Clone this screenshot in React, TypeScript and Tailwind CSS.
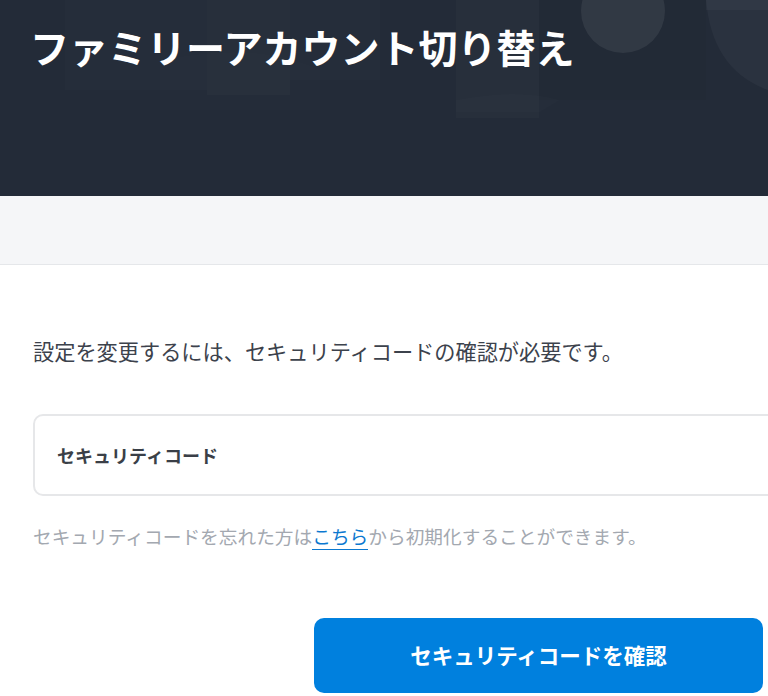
export default function App() {
  return (
    <div className="min-h-screen w-full overflow-hidden bg-white font-['Noto_Sans_CJK_JP','Noto_Sans',sans-serif]">
      {/* Header */}
      <header className="relative h-[196px] overflow-hidden bg-[#232b38]">
        <svg className="absolute inset-0 h-full w-full" viewBox="0 0 768 196" preserveAspectRatio="none">
          <rect x="65" y="0" width="142" height="90" fill="#ffffff" fillOpacity="0.012" />
          <rect x="207" y="0" width="83" height="95" fill="#ffffff" fillOpacity="0.02" />
          <rect x="290" y="0" width="90" height="80" fill="#ffffff" fillOpacity="0.01" />
          <rect x="456" y="0" width="83" height="118" fill="#ffffff" fillOpacity="0.018" />
          <rect x="539" y="0" width="167" height="100" fill="#000000" fillOpacity="0.02" />
          <circle cx="623" cy="11" r="42" fill="#ffffff" fillOpacity="0.07" />
          <path d="M706 0 H768 V90 Q712 70 706 0 Z" fill="#ffffff" fillOpacity="0.035" />
          <rect x="706" y="0" width="62" height="10" fill="#ffffff" fillOpacity="0.03" />
          <path d="M160 60 Q260 40 320 70 L320 110 L160 110 Z" fill="#ffffff" fillOpacity="0.008" />
          <path d="M456 100 Q520 88 560 100 L540 112 L456 112 Z" fill="#ffffff" fillOpacity="0.012" />
        </svg>
        <h1 className="relative pl-[30px] pt-[18px] text-[39px] font-bold leading-[56px] text-white">
          ファミリーアカウント切り替え
        </h1>
      </header>

      {/* Band */}
      <div className="h-[69px] border-b border-[#e5e7ea] bg-[#f5f6f8]" />

      {/* Content */}
      <main className="px-[33px] pt-[71px]">
        <p className="whitespace-nowrap text-[21.2px] leading-[30px] text-[#3c424c]">
          設定を変更するには、セキュリティコードの確認が必要です。
        </p>

        <div className="mt-[48px] flex h-[82px] w-[760px] shrink-0 items-center rounded-[10px] border-2 border-[#e6e7e9] px-[22px]">
          <span className="text-[18px] font-bold text-[#3a3f47]">セキュリティコード</span>
        </div>

        <p className="mt-[26px] whitespace-nowrap text-[18.7px] leading-[27px] text-[#a3a8b0]">
          セキュリティコードを忘れた方は
          <a className="border-b border-[#0b78d0] text-[#0b78d0]">こちら</a>
          から初期化することができます。
        </p>

        <div className="mt-[69px] flex">
          <button className="ml-[281px] flex h-[75px] w-[449px] shrink-0 items-center justify-center rounded-[10px] bg-[#0080de] text-[21.5px] font-bold text-white">
            セキュリティコードを確認
          </button>
        </div>
      </main>
    </div>
  );
}
